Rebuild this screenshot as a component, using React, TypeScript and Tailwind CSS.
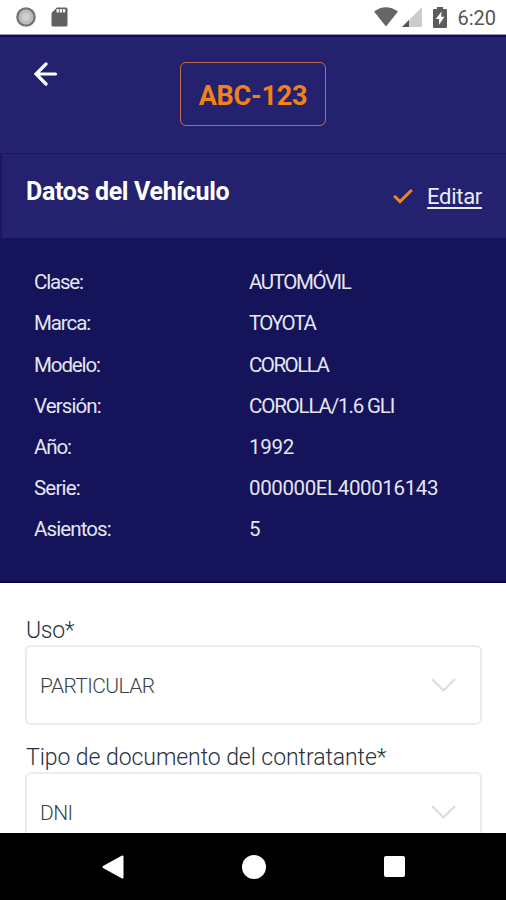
import React from 'react';

const vehicleData = [
  { label: 'Clase:', value: 'AUTOMÓVIL', labelClass: 'tracking-[-1.2px]', valueClass: 'tracking-[-1.4px]' },
  { label: 'Marca:', value: 'TOYOTA', labelClass: 'tracking-[-1.1px]', valueClass: 'tracking-[-1.7px]' },
  { label: 'Modelo:', value: 'COROLLA', labelClass: 'tracking-[-1.1px]', valueClass: 'tracking-[-1.5px]' },
  { label: 'Versión:', value: 'COROLLA/1.6 GLI', labelClass: 'tracking-[-0.9px]', valueClass: 'tracking-[-1.15px]' },
  { label: 'Año:', value: '1992', labelClass: 'tracking-[-1.1px]', valueClass: 'tracking-[-0.3px]' },
  { label: 'Serie:', value: '000000EL400016143', labelClass: 'tracking-[-0.8px]', valueClass: 'tracking-[-0.38px]' },
  { label: 'Asientos:', value: '5', labelClass: 'tracking-[-0.9px]', valueClass: 'tracking-normal' },
];

function StatusBar() {
  return (
    <div className="flex h-[35px] shrink-0 items-center justify-between border-b border-[#9999a5] bg-white pl-4 pr-[10px]">
      <div className="flex items-center gap-[15px]">
        <svg width="20" height="20" viewBox="0 0 20 20">
          <circle cx="10" cy="10" r="8.6" fill="#bdbdbd" stroke="#757575" strokeWidth="2.4" />
          <circle cx="10" cy="10" r="4" fill="#cfcfcf" />
        </svg>
        <svg width="17" height="20" viewBox="0 0 17 20">
          <path d="M6 0.5H15Q16.5 0.5 16.5 2V18Q16.5 19.5 15 19.5H2Q0.5 19.5 0.5 18V6Z" fill="#606060" />
          <path d="M5.5 2H7.9V5.5H5.5ZM8.7 2H11.1V5.5H8.7ZM11.9 2H14.3V5.5H11.9Z" fill="#f3f3f3" />
        </svg>
      </div>
      <div className="flex items-center">
        <svg width="24" height="20" viewBox="0 0 24 20">
          <path d="M0 4.5Q12 -4 24 4.5L12 19.5Z" fill="#666666" />
        </svg>
        <svg className="ml-[4px]" width="20" height="20" viewBox="0 0 20 20">
          <path d="M20 0V20H0Z" fill="#cccccc" />
          <path d="M7 13V20H0Z" fill="#555555" />
        </svg>
        <svg className="ml-[11px]" width="14" height="21" viewBox="0 0 14 21">
          <path d="M4 0H10V2H13Q14 2 14 3V20Q14 21 13 21H1Q0 21 0 20V3Q0 2 1 2H4Z" fill="#5c5c5c" />
          <path d="M8.5 4.5L2.8 12H6.1V17.8L11.4 9.8H8.2Z" fill="#ffffff" />
        </svg>
        <span className="ml-[10px] pt-[2px] text-[20px] leading-[20px] text-[#555555]">6:20</span>
      </div>
    </div>
  );
}

function Header() {
  return (
    <header className="flex h-[118px] shrink-0 items-start border-t-2 border-[#110e59] bg-[#24216f] pl-[34px] pt-[25px]">
      <svg width="24" height="24" viewBox="0 0 24 24" fill="none" stroke="#ffffff" strokeWidth="3.2" strokeLinecap="round">
        <path d="M12 2L2 12L12 22M2.5 12H21.5" />
      </svg>
      <div className="ml-[122px] flex h-[64px] w-[146px] items-center justify-center rounded-[6px] border-[1.5px] border-[#c56a50]">
        <span className="pt-[3px] text-[27px] font-bold leading-8 tracking-[-0.2px] text-[#f28218]">ABC-123</span>
      </div>
    </header>
  );
}

function SectionTitle() {
  return (
    <div className="flex h-[85px] shrink-0 justify-between border-l-2 border-t border-[#1c1860] bg-[#24216f] pl-6 pr-6">
      <h1 className="mt-[22px] text-[25px] font-bold leading-8 tracking-[-0.33px] text-white">Datos del Vehículo</h1>
      <div className="mt-[27px] flex h-8 items-center">
        <svg width="20" height="16" viewBox="0 0 20 16" fill="none" stroke="#ee8420" strokeWidth="3">
          <path d="M1.2 6.8L7 12.6L18.8 1" />
        </svg>
        <a className="ml-[14px] text-[22px] leading-8 tracking-[-0.3px] text-[#ececf5] underline decoration-[1.5px] underline-offset-[3px]">Editar</a>
      </div>
    </div>
  );
}

function SelectField({ label, value, labelClass, valueClass }: { label: string; value: string; labelClass: string; valueClass: string }) {
  return (
    <div className="flex flex-col">
      <label className={`h-[29px] whitespace-nowrap pl-px text-[23px] font-light leading-[30px] text-[#263242] ${labelClass}`}>{label}</label>
      <div className="flex h-[80px] items-center justify-between rounded-[6px] border-2 border-[#ececec] bg-white pl-[13px] pr-6">
        <span className={`pt-[2px] text-[21px] font-light leading-7 text-[#39434c] ${valueClass}`}>{value}</span>
        <svg width="25" height="15" viewBox="0 0 25 15" fill="none" stroke="#dddddd" strokeWidth="2.2">
          <path d="M1 1L12.5 12.5L24 1" />
        </svg>
      </div>
    </div>
  );
}

function NavigationBar() {
  return (
    <nav className="flex h-[67px] shrink-0 items-center bg-black pl-[102px]">
      <svg width="22" height="24" viewBox="0 0 22 24">
        <path d="M20.5 1.5V22.5L1.5 12Z" fill="#ffffff" stroke="#ffffff" strokeWidth="2" strokeLinejoin="round" />
      </svg>
      <div className="ml-[118px] size-[24px] rounded-full bg-white" />
      <div className="ml-[118px] size-[21px] rounded-[2px] bg-white" />
    </nav>
  );
}

export default function App() {
  return (
    <div className="flex h-[900px] w-[506px] flex-col overflow-hidden bg-white font-[Roboto,sans-serif]">
      <StatusBar />
      <Header />
      <SectionTitle />
      <section className="flex h-[345px] shrink-0 flex-col border-b-2 border-[#080346] bg-[#151359] pl-[34px] pt-[24px] text-[20.5px] text-[#e5e6f0]">
        {vehicleData.map((row) => (
          <div key={row.label} className="flex h-[41.2px] shrink-0 items-center">
            <span className={`w-[215px] ${row.labelClass}`}>{row.label}</span>
            <span className={row.valueClass}>{row.value}</span>
          </div>
        ))}
      </section>
      <main className="flex min-h-0 flex-1 flex-col gap-[18px] overflow-hidden pl-[25px] pr-6 pt-[33px]">
        <SelectField label="Uso*" value="PARTICULAR" labelClass="tracking-[-0.3px]" valueClass="tracking-[-0.6px]" />
        <SelectField label="Tipo de documento del contratante*" value="DNI" labelClass="tracking-[-0.06px]" valueClass="tracking-[-0.6px]" />
      </main>
      <NavigationBar />
    </div>
  );
}
